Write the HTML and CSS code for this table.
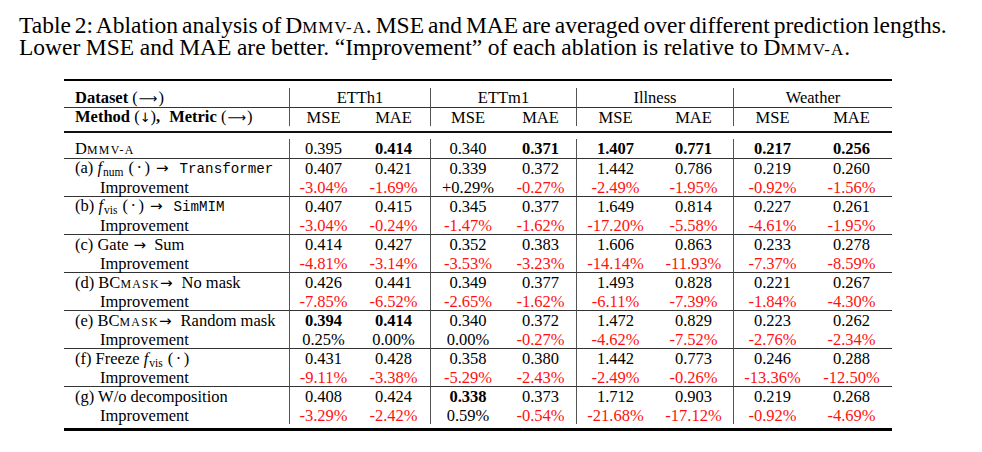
FILE: index.html
```html
<!DOCTYPE html>
<html lang="en">
<head>
<meta charset="utf-8">
<title>Table 2</title>
<link rel="stylesheet" href="styles.css">
</head>
<body>
<div class="page">
  <div class="caption">
    <div class="cap-l1">Table 2: Ablation analysis of D<span class="sc">MMV-A</span>. MSE and MAE are averaged over different prediction lengths.</div>
    <div class="cap-l2">Lower MSE and MAE are better. “Improvement” of each ablation is relative to D<span class="sc">MMV-A</span>.</div>
  </div>
  <table class="tbl">
    <colgroup>
      <col class="w0"><col class="w67"><col class="w74"><col class="w74"><col class="w72"><col class="w77"><col class="w80"><col class="w77"><col class="w81">
    </colgroup>
    <tbody>
      <tr class="r-top"><td colspan="9"></td></tr>
      <tr class="h1">
        <th class="c0 vr b">Dataset <span class="ar">(<span class="arl">⟶</span>)</span></th>
        <th colspan="2" class="vr">ETTh1</th>
        <th colspan="2" class="vr">ETTm1</th>
        <th colspan="2" class="vr">Illness</th>
        <th colspan="2">Weather</th>
      </tr>
      <tr class="h2">
        <th class="c0 vr b">Method <span class="ar">(<span class="ard">↓</span>)</span>,<span class="qd"></span>Metric <span class="ar">(<span class="arl">⟶</span>)</span></th>
        <th>MSE</th><th class="vr">MAE</th>
        <th>MSE</th><th class="vr">MAE</th>
        <th>MSE</th><th class="vr">MAE</th>
        <th>MSE</th><th>MAE</th>
      </tr>
      <tr class="r-mid"><td colspan="9"></td></tr>
      <tr class="r-sp"><td colspan="9"></td></tr>
      <tr class="base">
        <td class="c0 vr">D<span class="sc">MMV-A</span></td>
        <td>0.395</td><td class="vr b">0.414</td>
        <td>0.340</td><td class="vr b">0.371</td>
        <td class="b">1.407</td><td class="vr b">0.771</td>
        <td class="b">0.217</td><td class="b">0.256</td>
      </tr>

      <tr class="val">
        <td class="c0 vr">(a) <i>f</i><sub>num</sub><span class="par">(<span class="cd">·</span>)</span><span class="arr am">→</span><span class="tt">Transformer</span></td>
        <td>0.407</td><td class="vr">0.421</td>
        <td>0.339</td><td class="vr">0.372</td>
        <td>1.442</td><td class="vr">0.786</td>
        <td>0.219</td><td>0.260</td>
      </tr>
      <tr class="imp">
        <td class="c0 vr">Improvement</td>
        <td class="neg">-3.04%</td><td class="vr neg">-1.69%</td>
        <td>+0.29%</td><td class="vr neg">-0.27%</td>
        <td class="neg">-2.49%</td><td class="vr neg">-1.95%</td>
        <td class="neg">-0.92%</td><td class="neg">-1.56%</td>
      </tr>

      <tr class="val">
        <td class="c0 vr">(b) <i>f</i><sub>vis</sub><span class="par">(<span class="cd">·</span>)</span><span class="arr am">→</span><span class="tt">SimMIM</span></td>
        <td>0.407</td><td class="vr">0.415</td>
        <td>0.345</td><td class="vr">0.377</td>
        <td>1.649</td><td class="vr">0.814</td>
        <td>0.227</td><td>0.261</td>
      </tr>
      <tr class="imp">
        <td class="c0 vr">Improvement</td>
        <td class="neg">-3.04%</td><td class="vr neg">-0.24%</td>
        <td class="neg">-1.47%</td><td class="vr neg">-1.62%</td>
        <td class="neg">-17.20%</td><td class="vr neg">-5.58%</td>
        <td class="neg">-4.61%</td><td class="neg">-1.95%</td>
      </tr>

      <tr class="val">
        <td class="c0 vr">(c) Gate<span class="arr at">→</span>Sum</td>
        <td>0.414</td><td class="vr">0.427</td>
        <td>0.352</td><td class="vr">0.383</td>
        <td>1.606</td><td class="vr">0.863</td>
        <td>0.233</td><td>0.278</td>
      </tr>
      <tr class="imp">
        <td class="c0 vr">Improvement</td>
        <td class="neg">-4.81%</td><td class="vr neg">-3.14%</td>
        <td class="neg">-3.53%</td><td class="vr neg">-3.23%</td>
        <td class="neg">-14.14%</td><td class="vr neg">-11.93%</td>
        <td class="neg">-7.37%</td><td class="neg">-8.59%</td>
      </tr>

      <tr class="val">
        <td class="c0 vr">(d) BC<span class="sc">MASK</span><span class="arr ak">→</span>No mask</td>
        <td>0.426</td><td class="vr">0.441</td>
        <td>0.349</td><td class="vr">0.377</td>
        <td>1.493</td><td class="vr">0.828</td>
        <td>0.221</td><td>0.267</td>
      </tr>
      <tr class="imp">
        <td class="c0 vr">Improvement</td>
        <td class="neg">-7.85%</td><td class="vr neg">-6.52%</td>
        <td class="neg">-2.65%</td><td class="vr neg">-1.62%</td>
        <td class="neg">-6.11%</td><td class="vr neg">-7.39%</td>
        <td class="neg">-1.84%</td><td class="neg">-4.30%</td>
      </tr>

      <tr class="val">
        <td class="c0 vr">(e) BC<span class="sc">MASK</span><span class="arr ak">→</span>Random mask</td>
        <td class="b">0.394</td><td class="vr b">0.414</td>
        <td>0.340</td><td class="vr">0.372</td>
        <td>1.472</td><td class="vr">0.829</td>
        <td>0.223</td><td>0.262</td>
      </tr>
      <tr class="imp">
        <td class="c0 vr">Improvement</td>
        <td>0.25%</td><td class="vr">0.00%</td>
        <td>0.00%</td><td class="vr neg">-0.27%</td>
        <td class="neg">-4.62%</td><td class="vr neg">-7.52%</td>
        <td class="neg">-2.76%</td><td class="neg">-2.34%</td>
      </tr>

      <tr class="val">
        <td class="c0 vr">(f) Freeze <i>f</i><sub>vis</sub><span class="par">(<span class="cd">·</span>)</span></td>
        <td>0.431</td><td class="vr">0.428</td>
        <td>0.358</td><td class="vr">0.380</td>
        <td>1.442</td><td class="vr">0.773</td>
        <td>0.246</td><td>0.288</td>
      </tr>
      <tr class="imp">
        <td class="c0 vr">Improvement</td>
        <td class="neg">-9.11%</td><td class="vr neg">-3.38%</td>
        <td class="neg">-5.29%</td><td class="vr neg">-2.43%</td>
        <td class="neg">-2.49%</td><td class="vr neg">-0.26%</td>
        <td class="neg">-13.36%</td><td class="neg">-12.50%</td>
      </tr>

      <tr class="val">
        <td class="c0 vr">(g) W/o decomposition</td>
        <td>0.408</td><td class="vr">0.424</td>
        <td class="b">0.338</td><td class="vr">0.373</td>
        <td>1.712</td><td class="vr">0.903</td>
        <td>0.219</td><td>0.268</td>
      </tr>
      <tr class="imp last">
        <td class="c0 vr">Improvement</td>
        <td class="neg">-3.29%</td><td class="vr neg">-2.42%</td>
        <td>0.59%</td><td class="vr neg">-0.54%</td>
        <td class="neg">-21.68%</td><td class="vr neg">-17.12%</td>
        <td class="neg">-0.92%</td><td class="neg">-4.69%</td>
      </tr>
      <tr class="r-bot"><td colspan="9"></td></tr>
    </tbody>
  </table>
</div>
</body>
</html>
```

FILE: styles.css
```css
html, body {
  margin: 0;
  background: #ffffff;
}

body {
  font-family: "Liberation Serif", "Times New Roman", serif;
  color: #000000;
}

.page {
  padding: 14px 0 0 19px;
}

.caption {
  width: 940px;
  font-size: 23.5px;
  line-height: 22px;
  white-space: nowrap;
}

.cap-l1 {
  word-spacing: -1.9px;
}

.cap-l2 {
  word-spacing: -0.35px;
}

.sc {
  font-size: 0.72em;
  line-height: 0;
  letter-spacing: 0.11em;
}

.caption .sc {
  letter-spacing: 0.06em;
}

.tbl {
  margin: 21px 0 0 45px;
  border-collapse: separate;
  border-spacing: 0;
  table-layout: fixed;
  width: 828px;
  font-size: 16.5px;
  line-height: 17px;
}

.w0 { width: 226px; }
.w67 { width: 67px; }
.w72 { width: 72px; }
.w74 { width: 74px; }
.w77 { width: 77px; }
.w80 { width: 80px; }
.w81 { width: 81px; }

.tbl td,
.tbl th {
  padding: 0;
  text-align: center;
  vertical-align: middle;
  font-weight: normal;
  white-space: nowrap;
}

.tbl .c0 {
  text-align: left;
  padding-left: 11px;
}

.tbl .imp .c0 {
  padding-left: 36px;
}

.tbl .b {
  font-weight: bold;
}

.ar {
  font-weight: normal;
}

.arl {
  font-family: "DejaVu Sans", sans-serif;
  font-size: 13px;
  margin: 0 1px;
}

.ard {
  font-family: "DejaVu Sans", sans-serif;
  font-size: 13px;
}

.arr {
  font-family: "DejaVu Sans", sans-serif;
  font-size: 15px;
  display: inline-block;
}

.am {
  margin: 0 11px 0 6px;
}

.at {
  margin: 0 8px 0 5px;
}

.ak {
  margin: 0 9px 0 0;
}

.qd {
  display: inline-block;
  width: 9px;
}

.vr {
  border-right: 1px solid #555555;
}

.r-top td {
  height: 7px;
  border-top: 2px solid #000000;
}

.h1 th {
  height: 19px;
  border-bottom: 1px solid #333333;
}

.h2 th {
  height: 17px;
}

.r-mid td {
  height: 5px;
  border-bottom: 2px solid #111111;
}

.r-sp td {
  height: 6px;
}

.base td {
  height: 19px;
  border-bottom: 1px solid #333333;
}

.val td {
  height: 19px;
}

.imp td {
  height: 18px;
  border-bottom: 1px solid #333333;
}

.imp.last td {
  border-bottom: none;
}

.r-bot td {
  height: 4px;
  border-bottom: 3px solid #000000;
}

.neg {
  color: #ff1010;
}

.tbl sub {
  font-size: 11.5px;
  vertical-align: -3px;
  line-height: 0;
  margin-left: 1px;
}

.par {
  margin-left: 5px;
}

.cd {
  margin: 0 2.5px;
}

.tt {
  font-family: "Liberation Mono", "Courier New", monospace;
  font-size: 14.2px;
}
```
